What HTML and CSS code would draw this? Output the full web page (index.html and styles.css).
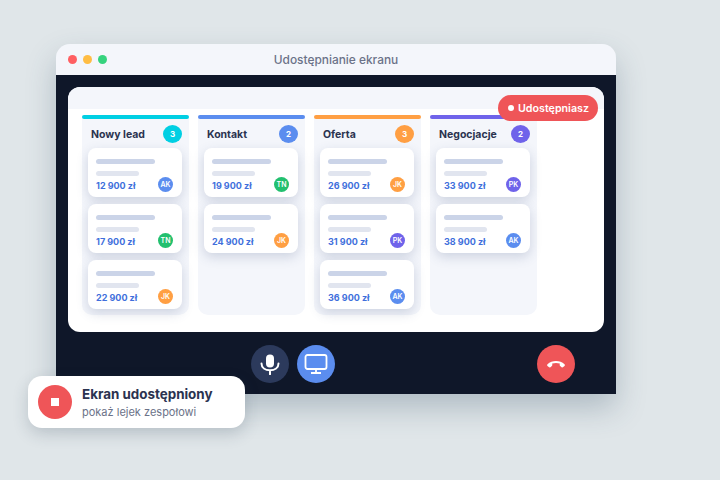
FILE: index.html
```html
<!DOCTYPE html>
<html lang="pl">
<head>
    <meta charset="UTF-8">
    <title>Udostępnianie ekranu</title>
    <link rel="stylesheet" href="styles.css">
</head>
<body>
    <div class="window">
        <div class="titlebar">
            <div class="dots">
                <span class="dot dot-red"></span>
                <span class="dot dot-yellow"></span>
                <span class="dot dot-green"></span>
            </div>
            <div class="title">Udostępnianie ekranu</div>
        </div>
        <div class="call">
            <div class="screen">
                <div class="screen-top"></div>
                <div class="board">
                    <div class="column">
                        <div class="column-bar cyan"></div>
                        <div class="column-head"><span class="column-name">Nowy lead</span><span class="count cyan">3</span></div>
                        <div class="card"><div class="line"></div><div class="line short"></div><div class="card-foot"><span class="price">12 900 zł</span><span class="avatar blue">AK</span></div></div>
                        <div class="card"><div class="line"></div><div class="line short"></div><div class="card-foot"><span class="price">17 900 zł</span><span class="avatar green">TN</span></div></div>
                        <div class="card"><div class="line"></div><div class="line short"></div><div class="card-foot"><span class="price">22 900 zł</span><span class="avatar orange">JK</span></div></div>
                    </div>
                    <div class="column">
                        <div class="column-bar blue"></div>
                        <div class="column-head"><span class="column-name">Kontakt</span><span class="count blue">2</span></div>
                        <div class="card"><div class="line"></div><div class="line short"></div><div class="card-foot"><span class="price">19 900 zł</span><span class="avatar green">TN</span></div></div>
                        <div class="card"><div class="line"></div><div class="line short"></div><div class="card-foot"><span class="price">24 900 zł</span><span class="avatar orange">JK</span></div></div>
                    </div>
                    <div class="column">
                        <div class="column-bar orange"></div>
                        <div class="column-head"><span class="column-name">Oferta</span><span class="count orange">3</span></div>
                        <div class="card"><div class="line"></div><div class="line short"></div><div class="card-foot"><span class="price">26 900 zł</span><span class="avatar orange">JK</span></div></div>
                        <div class="card"><div class="line"></div><div class="line short"></div><div class="card-foot"><span class="price">31 900 zł</span><span class="avatar purple">PK</span></div></div>
                        <div class="card"><div class="line"></div><div class="line short"></div><div class="card-foot"><span class="price">36 900 zł</span><span class="avatar blue">AK</span></div></div>
                    </div>
                    <div class="column">
                        <div class="column-bar purple"></div>
                        <div class="column-head"><span class="column-name">Negocjacje</span><span class="count purple">2</span></div>
                        <div class="card"><div class="line"></div><div class="line short"></div><div class="card-foot"><span class="price">33 900 zł</span><span class="avatar purple">PK</span></div></div>
                        <div class="card"><div class="line"></div><div class="line short"></div><div class="card-foot"><span class="price">38 900 zł</span><span class="avatar blue">AK</span></div></div>
                    </div>
                </div>
                <div class="sharing"><span class="sharing-dot"></span>Udostępniasz</div>
            </div>
            <div class="controls">
                <div class="control mic">
                    <svg width="20" height="21" viewBox="0 0 20 21">
                        <rect x="6" y="0.500" width="8" height="13" rx="4" fill="#fff"/>
                        <path d="M1.500 9.500c0 4.300 3.800 6.800 8.500 6.800s8.500-2.500 8.500-6.800M10 16.300v4" fill="none" stroke="#fff" stroke-width="2" stroke-linecap="round"/>
                    </svg>
                </div>
                <div class="control monitor">
                    <svg width="24" height="20" viewBox="0 0 24 20">
                        <rect x="1.500" y="1" width="21" height="14" rx="2" fill="none" stroke="#fff" stroke-width="1.800"/>
                        <path d="M12 15v3.500M7 19h10" fill="none" stroke="#fff" stroke-width="1.800"/>
                    </svg>
                </div>
                <div class="control hangup">
                    <svg width="20" height="10" viewBox="0 0 20 10">
                        <path d="M1.500 5.200C6 .8 14 .8 18.500 5.200c.6.6.5 1.200 0 1.700l-1.300 1.200c-.5.5-1.100.5-1.600.1l-1.500-1.300c-.4-.4-.5-.8-.4-1.300l.1-1c-2.400-.8-5.200-.8-7.600 0l.1 1c.1.500 0 .9-.4 1.300L4.400 8.200c-.5.4-1.100.4-1.600-.1L1.500 6.900c-.5-.5-.6-1.100 0-1.700z" fill="#fff"/>
                    </svg>
                </div>
            </div>
        </div>
    </div>
    <div class="toast">
        <div class="toast-icon"><span class="stop"></span></div>
        <div>
            <div class="toast-title">Ekran udostępniony</div>
            <div class="toast-sub">pokaż lejek zespołowi</div>
        </div>
    </div>
</body>
</html>
```

FILE: styles.css
```css
body {
    margin: 0;
    width: 720px;
    height: 480px;
    overflow: hidden;
    position: relative;
    background: #e0e6e9;
    font-family: "Inter", "Noto Sans", sans-serif;
}
.window {
    width: 560px;
    margin: 44px 0 0 56px;
    border-radius: 14px 14px 0 0;
    box-shadow: 0 14px 30px rgba(50, 80, 100, 0.28);
}
.titlebar {
    height: 31px;
    display: flex;
    align-items: center;
    position: relative;
    background: #f4f6fb;
    border-radius: 14px 14px 0 0;
}
.dots {
    display: flex;
    gap: 6px;
    padding-left: 12px;
}
.dot {
    width: 9px;
    height: 9px;
    border-radius: 50%;
}
.dot-red { background: #ff5f62; }
.dot-yellow { background: #ffbd44; }
.dot-green { background: #36d37e; }
.title {
    position: absolute;
    left: 0;
    right: 0;
    text-align: center;
    font-size: 11.900px;
    font-weight: 500;
    color: #6b7288;
}
.call {
    height: 319px;
    padding: 12px 12px 0;
    box-sizing: border-box;
    background: #0f1729;
}
.screen {
    height: 245px;
    position: relative;
    background: #fff;
    border-radius: 12px;
}
.screen-top {
    height: 22px;
    background: #f4f6fb;
    border-radius: 12px 12px 0 0;
}
.board {
    display: flex;
    align-items: stretch;
    gap: 9px;
    padding: 6px 14px 0;
}
.column {
    width: 107px;
    height: 200px;
    box-sizing: border-box;
    padding: 0 7px 0 6px;
    background: #f4f6fb;
    border-radius: 4px 4px 10px 10px;
}
.column-bar {
    height: 4px;
    margin: 0 -7px 0 -6px;
    border-radius: 2px;
}
.column-head {
    height: 29px;
    display: flex;
    align-items: center;
    justify-content: space-between;
    padding: 1px 0 0 3px;
    box-sizing: border-box;
}
.column-name {
    font-size: 10.500px;
    font-weight: 700;
    color: #2b3350;
}
.count {
    width: 19px;
    height: 18px;
    border-radius: 50%;
    display: flex;
    align-items: center;
    justify-content: center;
    font-size: 8px;
    font-weight: 700;
    color: #fff;
}
.cyan { background: #00cfe3; }
.blue { background: #5b8def; }
.orange { background: #ff9f43; }
.purple { background: #6f63ea; }
.green { background: #22c06f; }
.card {
    height: 49px;
    box-sizing: border-box;
    margin-bottom: 7px;
    padding: 11px 9px 0 8px;
    background: #fff;
    border-radius: 8px;
    box-shadow: 0 4px 12px rgba(70, 85, 130, 0.22);
}
.line {
    width: 59px;
    height: 5px;
    border-radius: 3px;
    background: #cbd4e8;
}
.line.short {
    width: 43px;
    margin-top: 7px;
    background: #e1e5ef;
}
.card-foot {
    display: flex;
    align-items: center;
    justify-content: space-between;
    margin-top: 1px;
}
.price {
    font-size: 9px;
    font-weight: 700;
    color: #3f6fdc;
    padding-top: 1px;
}
.avatar {
    width: 15px;
    height: 15px;
    border-radius: 50%;
    display: flex;
    align-items: center;
    justify-content: center;
    font-size: 7px;
    font-weight: 600;
    color: #fff;
}
.sharing {
    position: absolute;
    top: 8px;
    right: 6px;
    width: 100px;
    height: 26px;
    box-sizing: border-box;
    padding-left: 10px;
    display: flex;
    align-items: center;
    gap: 4px;
    border-radius: 13px;
    background: #ef5558;
    color: #fff;
    font-size: 10.700px;
    font-weight: 600;
}
.sharing-dot {
    width: 6px;
    height: 6px;
    border-radius: 50%;
    background: #fff;
}
.controls {
    display: flex;
    gap: 8px;
    padding: 13px 29px 0 183px;
}
.control {
    width: 38px;
    height: 38px;
    border-radius: 50%;
    display: flex;
    align-items: center;
    justify-content: center;
}
.mic { background: #2c3a5c; }
.monitor { background: #5b8def; }
.hangup {
    margin-left: auto;
    background: #ef5558;
}
.toast {
    position: absolute;
    left: 28px;
    top: 376px;
    width: 217px;
    height: 52px;
    box-sizing: border-box;
    padding-left: 10px;
    display: flex;
    align-items: center;
    gap: 10px;
    background: #fff;
    border-radius: 14px;
    box-shadow: 0 6px 16px rgba(40, 60, 80, 0.2);
}
.toast-icon {
    width: 34px;
    height: 34px;
    border-radius: 50%;
    background: #ef5558;
    display: flex;
    align-items: center;
    justify-content: center;
}
.stop {
    width: 8px;
    height: 8px;
    background: #fff;
}
.toast-title {
    font-size: 13.400px;
    font-weight: 700;
    color: #2b3350;
    margin-bottom: 3px;
}
.toast-sub {
    font-size: 11px;
    color: #6b7288;
}
```
